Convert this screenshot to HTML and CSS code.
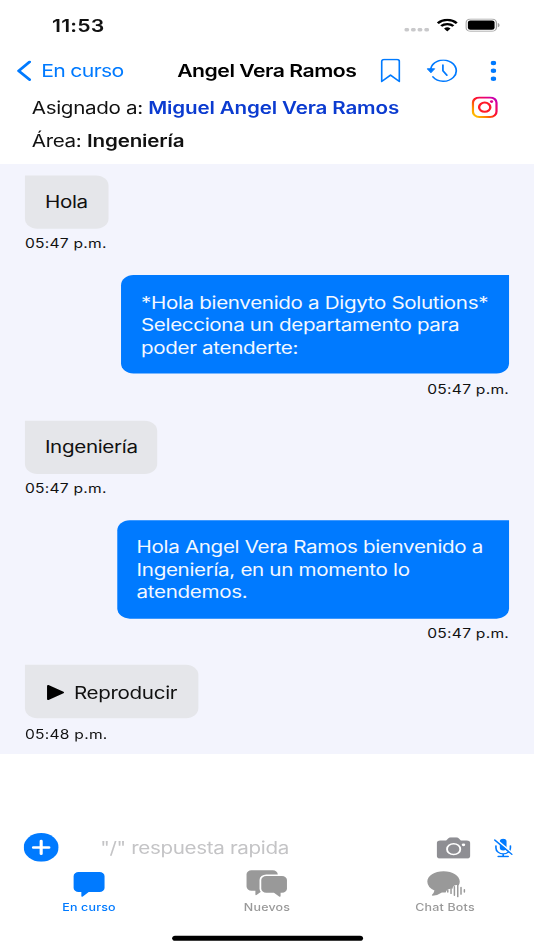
FILE: index.html
```html
<!DOCTYPE html>
<html lang="es">
<head>
  <meta charset="utf-8">
  <title>Angel Vera Ramos</title>
  <link rel="stylesheet" href="styles.css">
</head>
<body>
  <div class="phone">
    <div class="status">
      <span class="clock">11:53</span>
      <svg class="signal" width="20" height="4" viewBox="0 0 20 4" fill="#c9c9cb">
        <circle cx="2" cy="2" r="2"/><circle cx="7.3" cy="2" r="2"/><circle cx="12.6" cy="2" r="2"/><circle cx="18" cy="2" r="2"/>
      </svg>
      <svg class="wifi" width="17" height="13" viewBox="0 0 17 13">
        <path d="M.9 4.6a10.8 10.8 0 0 1 15.2 0M3.6 7.4a7 7 0 0 1 9.8 0" fill="none" stroke="#000" stroke-width="2.2"/>
        <path d="M8.5 12.6l2.6-2.8a3.8 3.8 0 0 0-5.2 0z"/>
      </svg>
      <svg class="battery" width="28" height="13" viewBox="0 0 28 13">
        <rect x=".5" y=".5" width="24.4" height="12" rx="3.8" fill="none" stroke="#a0a0a0"/>
        <rect x="2" y="2" width="21.4" height="9" rx="2"/>
        <path d="M26 4.5v4c.8-.3 1.4-1.1 1.4-2s-.6-1.7-1.4-2z" fill="#a0a0a0"/>
      </svg>
    </div>

    <div class="nav">
      <svg class="back" width="12" height="20" viewBox="0 0 12 20"><path d="M10.7 1.3L2 10l8.7 8.7" fill="none" stroke="#007aff" stroke-width="2.5" stroke-linecap="round" stroke-linejoin="round"/></svg>
      <span class="back-label">En curso</span>
      <span class="title">Angel Vera Ramos</span>
      <svg class="bookmark" width="16" height="24" viewBox="0 0 16 24"><path d="M.9 22.4V3a2 2 0 0 1 2-2h10.2a2 2 0 0 1 2 2v19.4L8 16.2z" fill="none" stroke="#007aff" stroke-width="1.4" stroke-linejoin="round"/></svg>
      <svg class="history" width="25" height="22" viewBox="0 0 25 22">
        <path d="M3.2 9.3a10.3 10.3 0 1 1 1.8 7.6" fill="none" stroke="#007aff" stroke-width="1.4" stroke-linecap="round"/>
        <path d="M.4 9h6L3.4 13z" fill="#007aff" stroke="#007aff" stroke-width=".8" stroke-linejoin="round"/>
        <path d="M13 5.4V11l3.2 4.3" fill="none" stroke="#007aff" stroke-width="1.4" stroke-linecap="round" stroke-linejoin="round"/>
      </svg>
      <svg class="more" width="5" height="20" viewBox="0 0 5 20" fill="#007aff"><circle cx="2.5" cy="2.3" r="2.2"/><circle cx="2.5" cy="10" r="2.2"/><circle cx="2.5" cy="17.7" r="2.2"/></svg>
    </div>

    <div class="info">
      <div class="info-text">
        <p class="assigned">Asignado a: <b class="agent">Miguel Angel Vera Ramos</b></p>
        <p class="area">Área: <b>Ingeniería</b></p>
      </div>
      <svg class="instagram" width="21" height="21" viewBox="0 0 21 21">
        <defs>
          <linearGradient id="ig" x1="0" y1="1" x2="1" y2="0">
            <stop offset="0" stop-color="#ffd000"/><stop offset=".25" stop-color="#ff8a00"/><stop offset=".5" stop-color="#ff1620"/><stop offset=".78" stop-color="#e6007f"/><stop offset="1" stop-color="#b900c8"/>
          </linearGradient>
        </defs>
        <rect x="1" y="1" width="19" height="19" rx="5.2" fill="none" stroke="url(#ig)" stroke-width="1.9"/>
        <circle cx="10.5" cy="10.5" r="4.5" fill="none" stroke="#ff1a28" stroke-width="1.9"/>
        <circle cx="16" cy="5" r="1.3" fill="#e0058a"/>
      </svg>
    </div>

    <div class="chat">
      <div class="msg">
        <div class="bubble w-hola">Hola</div>
        <span class="time">05:47 p.m.</span>
      </div>
      <div class="msg out">
        <div class="bubble w-menu">*Hola bienvenido a Digyto Solutions*<br>Selecciona un departamento para<br>poder atenderte:</div>
        <span class="time">05:47 p.m.</span>
      </div>
      <div class="msg">
        <div class="bubble w-ing">Ingeniería</div>
        <span class="time">05:47 p.m.</span>
      </div>
      <div class="msg out">
        <div class="bubble w-welcome">Hola Angel Vera Ramos bienvenido a<br>Ingeniería, en un momento lo<br>atendemos.</div>
        <span class="time">05:47 p.m.</span>
      </div>
      <div class="msg">
        <div class="bubble w-play">
          <svg class="play" width="15" height="16" viewBox="0 0 15 16"><path d="M1.5 1.5v13l12-6.5z" stroke="#000" stroke-width="1.6" stroke-linejoin="round"/></svg>Reproducir
        </div>
        <span class="time">05:48 p.m.</span>
      </div>
    </div>

    <div class="composer">
      <svg class="plus" width="28" height="28" viewBox="0 0 28 28"><circle cx="14" cy="14" r="14" fill="#007aff"/><path d="M14 7.8v12.4M7.8 14h12.4" stroke="#fff" stroke-width="2.5" stroke-linecap="round"/></svg>
      <span class="placeholder">"/" respuesta rapida</span>
      <svg class="camera" width="27" height="21" viewBox="0 0 27 21">
        <path d="M3 3.2h4.6L9.2 1.2Q10 .2 11.3.2h4.4q1.3 0 2.1 1l1.6 2H24a3 3 0 0 1 3 3v11.6a3 3 0 0 1-3 3H3a3 3 0 0 1-3-3V6.2a3 3 0 0 1 3-3z" fill="#8e8e93"/>
        <circle cx="13.6" cy="11.7" r="5.3" fill="none" stroke="#fff" stroke-width="1.5"/>
        <circle cx="21.5" cy="7.5" r="1.4" fill="#fff"/>
      </svg>
      <svg class="mic" width="15" height="19" viewBox="0 0 15 19">
        <rect x="4.6" y=".5" width="5.4" height="11.5" rx="2.7" fill="#007aff"/>
        <path d="M1.5 7.5v2a5.8 5.8 0 0 0 11.6 0v-2M7.3 15.3v2.5M3.3 17.9h8" fill="none" stroke="#007aff" stroke-width="1.3" stroke-linecap="round"/>
        <path d="M1.3.8l13.5 14" stroke="#fff" stroke-width="1.5"/>
        <path d="M.5 1.8l13.8 14" stroke="#007aff" stroke-width="1.3" stroke-linecap="round"/>
      </svg>
    </div>

    <div class="tabs">
      <div class="tab active">
        <svg width="34" height="28" viewBox="0 0 34 28"><path d="M9 3h16.8a4 4 0 0 1 4 4v11.5a4 4 0 0 1-4 4H17.1l-4.7 4.3q-1.2.8-1.2-.6v-3.7H9a4 4 0 0 1-4-4V7a4 4 0 0 1 4-4z" fill="#007aff"/></svg>
        <span>En curso</span>
      </div>
      <div class="tab">
        <svg width="34" height="28" viewBox="0 0 34 28" fill="#999">
          <path d="M4.6 1.2h17a4 4 0 0 1 4 4v12a4 4 0 0 1-4 4h-8.4l-4.3 4q-1.2.9-1.2-.5v-3.5H4.6a4 4 0 0 1-4-4v-12a4 4 0 0 1 4-4z"/>
          <path d="M16.4 6.8H29a4 4 0 0 1 4 4v8.4a4 4 0 0 1-4 4h-1.1v3q0 1.5-1.2.6l-4.1-3.6h-6.2a4 4 0 0 1-4-4v-8.4a4 4 0 0 1 4-4z" stroke="#fff" stroke-width="2.8" paint-order="stroke"/>
        </svg>
        <span>Nuevos</span>
      </div>
      <div class="tab">
        <svg width="34" height="28" viewBox="0 0 34 28">
          <path d="M15.5 2.3c7.2 0 13 4.3 13 10q0 2-.8 3.6-4.5-1.2-5 3.4-4.500-.6-5.500 3.600h-3q-3.400 2.900-7.500 3.200-1-.4-.3-1.300 1.500-1.500 1.800-3.700-5.700-3.200-5.700-8.800c0-5.700 5.800-10 13-10z" fill="#999"/>
          <path d="M19.4 20.7v1.8M22 19.4v4.5M24.7 17.2v8.5M27.4 15.5v11.5M30 18v6.600M32.7 20.200v2.300" transform="translate(-.5)" stroke="#999" stroke-width="1.2" stroke-linecap="round"/>
        </svg>
        <span>Chat Bots</span>
      </div>
    </div>
    <div class="home"></div>
  </div>
</body>
</html>
```
FILE: styles.css
```css
html, body {
  height: 100%;
  margin: 0;
  overflow: hidden;
}
body {
  font-family: Inter, "Liberation Sans", sans-serif;
  background: #fff;
}
/* 428 x 926 device screen stretched to the window */
.phone {
  width: 428px;
  height: 926px;
  transform: scale(1.24766, 1.02592);
  transform-origin: 0 0;
  display: flex;
  flex-direction: column;
  font-size: 16.5px;
  letter-spacing: -.27px;
  color: #111;
}
.phone svg {
  display: block;
  flex: none;
}
.phone span {
  white-space: nowrap;
}

.status {
  height: 49px;
  display: flex;
  align-items: center;
  padding-right: 27px;
}
.clock {
  margin-left: 41.7px;
  flex: 1;
  font-size: 17px;
  font-weight: 600;
  letter-spacing: .15px;
}
.signal {
  margin: 9px 6px 0 0;
}
.battery {
  margin-left: 6px;
}

.nav {
  height: 40.4px;
  display: flex;
  align-items: center;
  font-size: 17px;
}
.back {
  margin-left: 13px;
}
.back-label {
  margin-left: 8px;
  width: 109px;
  color: #007aff;
  letter-spacing: -.55px;
}
.title {
  width: 162.5px;
  font-weight: 600;
  color: #000;
  letter-spacing: -.4px;
}
.history {
  margin-left: 21px;
}
.more {
  margin-left: 26.5px;
}

.info {
  height: 70.6px;
  display: flex;
  padding-left: 25.5px;
}
.info-text {
  flex: 1;
}
.info p {
  margin: 0;
  height: 32px;
  line-height: 33px;
  white-space: nowrap;
}
.info b {
  font-weight: 600;
  letter-spacing: -.12px;
}
.agent {
  color: #0b3bd0;
}
.instagram {
  margin: 5px 29px 0 0;
}

.chat {
  box-sizing: border-box;
  height: 573.7px;
  padding: 11px 20px 0;
  background: #f3f4fd;
}
.msg {
  display: flex;
  flex-direction: column;
  align-items: flex-start;
  margin-bottom: 20.8px;
}
.out {
  align-items: flex-end;
}
.bubble {
  box-sizing: border-box;
  padding: 15.5px 16px 14.5px;
  line-height: 22px;
  border-radius: 0 10px 10px 10px;
  background: #e5e6ea;
  white-space: nowrap;
}
.out .bubble {
  border-radius: 10px 0 10px 10px;
  background: #007aff;
  color: #f3f8ff;
}
.w-hola {
  width: 66.5px;
}
.w-menu {
  width: 311px;
}
.w-ing {
  width: 106px;
}
.w-welcome {
  width: 314.5px;
}
.w-play {
  width: 138.5px;
  display: flex;
  align-items: center;
}
.play {
  margin: 0 7.3px 0 1px;
}
.time {
  height: 18px;
  margin-top: 6.5px;
  line-height: 18px;
  font-size: 12.5px;
  letter-spacing: .2px;
}

.composer {
  height: 34px;
  margin-top: 75.8px;
  display: flex;
  align-items: center;
}
.plus {
  margin-left: 18.6px;
}
.placeholder {
  margin-left: 33.7px;
  width: 269.7px;
  color: #c4c4c6;
}
.mic {
  margin-left: 19px;
}

.tabs {
  height: 68.5px;
  padding-top: 3.5px;
  box-sizing: border-box;
  display: flex;
}
.tab {
  flex: 1;
  display: flex;
  flex-direction: column;
  align-items: center;
  font-size: 10px;
  font-weight: 500;
  letter-spacing: .15px;
  line-height: 12px;
  color: #999;
}
.tab span {
  margin-top: 3px;
}
.active {
  color: #007aff;
}
.home {
  width: 153px;
  height: 5px;
  border-radius: 3px;
  background: #000;
  margin: 0 auto;
}
```
